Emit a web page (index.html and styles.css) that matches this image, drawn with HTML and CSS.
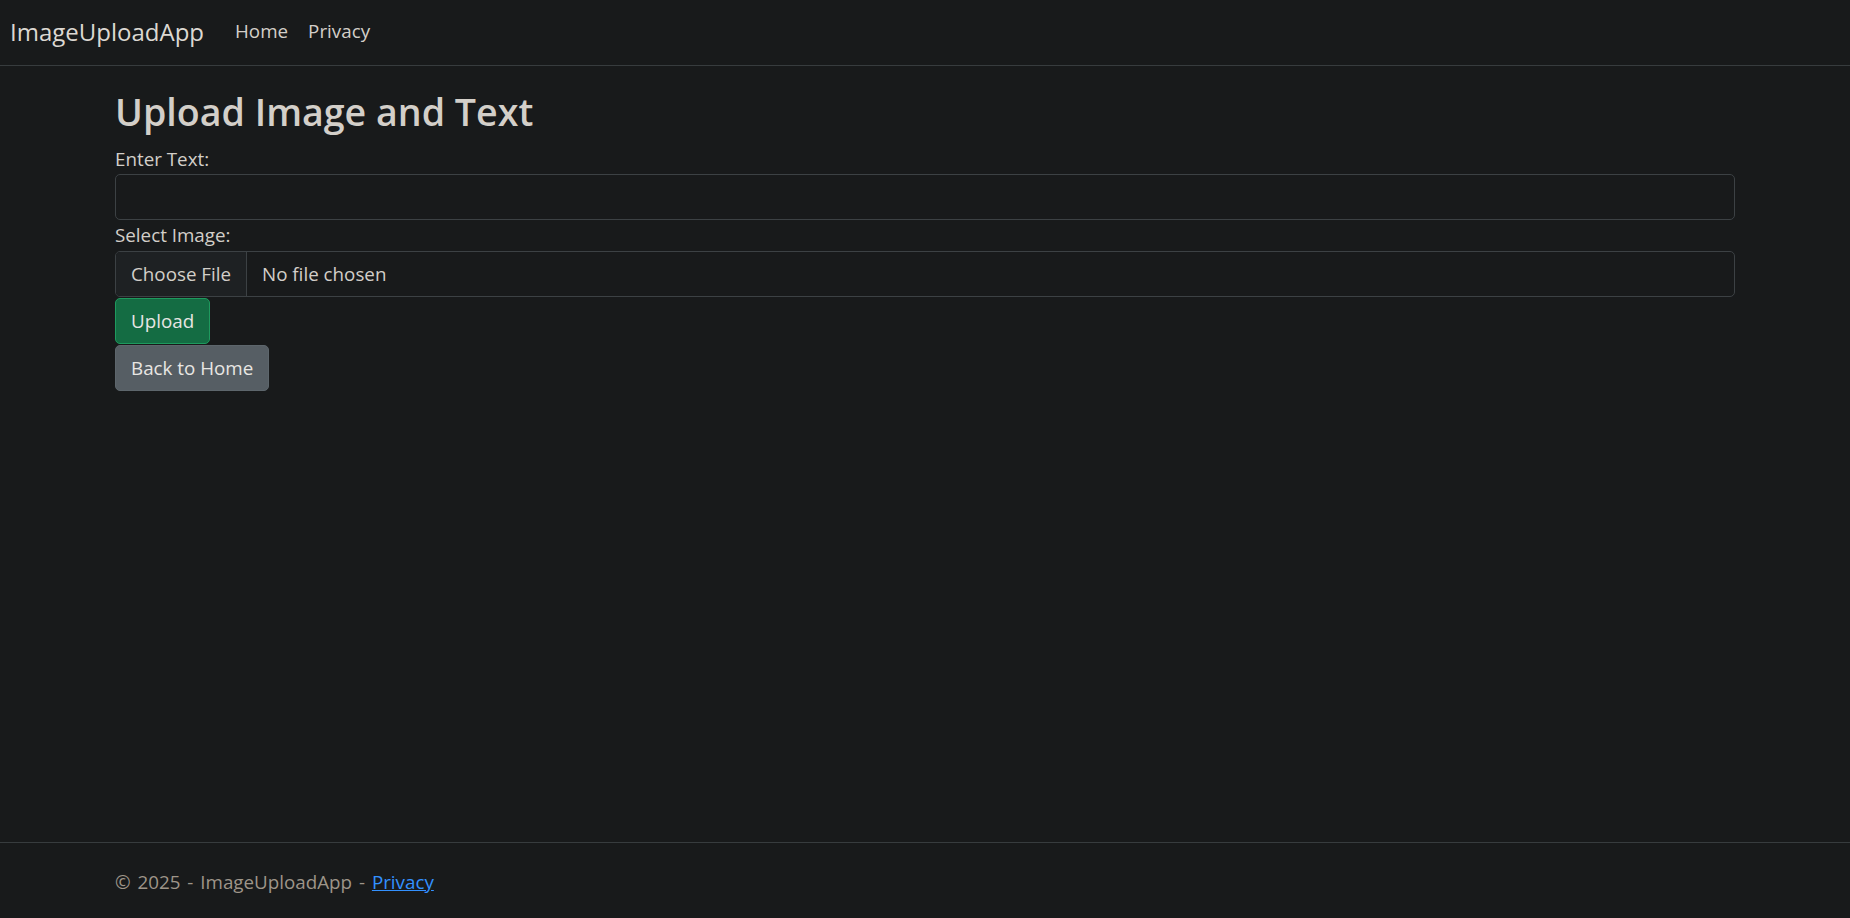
FILE: index.html
```html
<!DOCTYPE html>
<html lang="en">
<head>
<meta charset="utf-8">
<title>Upload Image and Text - ImageUploadApp</title>
<link rel="stylesheet" href="styles.css">
</head>
<body>
<header class="navbar">
  <a class="brand" href="#">ImageUploadApp</a>
  <nav class="nav">
    <a class="nav-link" href="#">Home</a>
    <a class="nav-link" href="#">Privacy</a>
  </nav>
</header>
<main class="container">
  <h2 class="title">Upload Image and Text</h2>
  <form class="upload-form">
    <label class="field-label" for="txt">Enter Text:</label>
    <input class="text-input" id="txt" type="text">
    <label class="field-label">Select Image:</label>
    <div class="file-control">
      <span class="file-btn">Choose File</span>
      <span class="file-name">No file chosen</span>
    </div>
    <div class="actions">
      <button class="btn btn-success" type="button">Upload</button>
    </div>
  </form>
  <div class="actions">
    <a class="btn btn-secondary" href="#">Back to Home</a>
  </div>
</main>
<footer class="footer">
  <div class="container footer-inner">© 2025 - ImageUploadApp - <a class="footer-link" href="#">Privacy</a></div>
</footer>
</body>
</html>
```
FILE: styles.css
```css
* { box-sizing: border-box; }
html, body { height: 100%; }
body {
  margin: 0;
  background: #181a1b;
  color: #d3cfc9;
  font-family: "Open Sans", "Noto Sans", sans-serif;
  font-size: 18.8px;
  line-height: 30px;
  display: flex;
  flex-direction: column;
  min-height: 100vh;
}
a { color: inherit; text-decoration: none; }

.navbar {
  display: flex;
  align-items: center;
  height: 66px;
  padding: 0 8px 3px 10px;
  border-bottom: 1px solid #373c3e;
  margin-bottom: 20px;
  flex-shrink: 0;
}
.brand {
  font-size: 24px;
  line-height: 37px;
  color: #dcd8d2;
  margin-right: 21px;
}
.nav { display: flex; }
.nav-link {
  padding: 0 10px;
  color: #d3cfc9;
}

.container {
  width: 100%;
  max-width: 1650px;
  margin: 0 auto;
  padding: 0 15px;
}
main.container { flex: 1; }

.title {
  margin: 0 0 8px;
  padding-top: 2px;
  font-size: 37.6px;
  line-height: 48px;
  font-weight: 600;
  color: #d3cfc9;
}
.upload-form { display: flex; flex-direction: column; }
.field-label { display: block; line-height: 31px; }
.upload-form .field-label:first-child { line-height: 30px; }
.text-input {
  display: block;
  width: 100%;
  height: 46px;
  background: #181a1b;
  border: 1px solid #3c4144;
  border-radius: 5px;
  color: #d3cfc9;
  font: inherit;
  padding: 7px 15px;
}
.file-control {
  display: flex;
  align-items: stretch;
  height: 46px;
  border: 1px solid #3c4144;
  border-radius: 5px;
  overflow: hidden;
}
.file-btn {
  display: flex;
  align-items: center;
  padding: 0 15px;
  background: #1e2123;
  border-right: 1px solid #3c4144;
  color: #d3cfc9;
}
.file-name {
  display: flex;
  align-items: center;
  padding-left: 15px;
  color: #d3cfc9;
}
.actions { display: flex; margin-top: 1px; }
.btn {
  display: inline-flex;
  align-items: center;
  height: 46px;
  padding: 0 15px;
  border-radius: 5px;
  font: inherit;
  color: #e8e6e3;
  cursor: pointer;
}
.btn-success {
  background: #146c43;
  border: 1px solid #1e9a5e;
}
.btn-secondary {
  background: #565e64;
  border: 1px solid #5d666c;
}

.footer {
  flex-shrink: 0;
  border-top: 1px solid #373c3e;
  height: 76px;
  color: #9e9589;
}
.footer-inner { line-height: 75px; padding-top: 2px; word-spacing: 2px; }
.footer-link {
  color: #3391ff;
  text-decoration: underline;
}
```
